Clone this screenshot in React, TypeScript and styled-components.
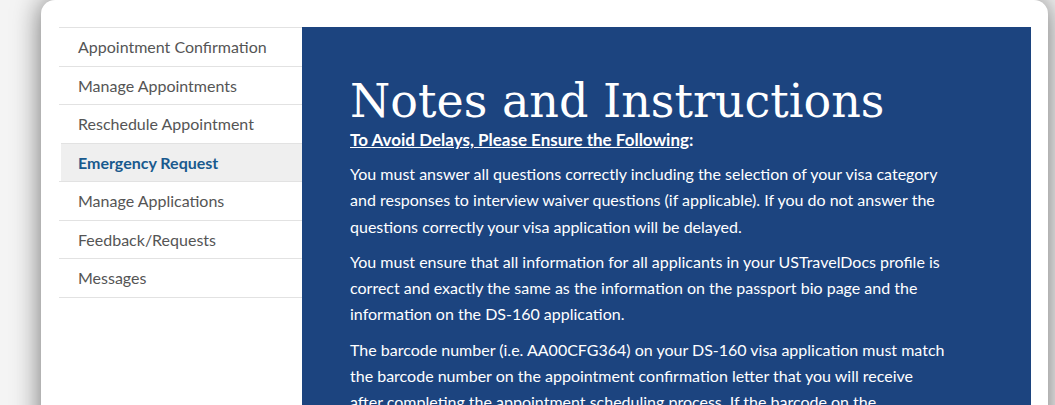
import React from 'react';
import styled, { createGlobalStyle } from 'styled-components';

const GlobalStyle = createGlobalStyle`
  html, body {
    margin: 0;
    padding: 0;
    background: #f4f4f4;
    overflow: hidden;
  }
`;

const Page = styled.div`
  padding: 0 7px 0 41px;
  height: 405px;
`;

const Card = styled.div`
  display: flex;
  align-items: flex-start;
  height: 420px;
  background: #fff;
  border-radius: 14px 14px 0 0;
  padding: 27px 17px 0 18px;
  box-shadow: 0 0 28px rgba(0, 0, 0, 0.55);
`;

const SideNav = styled.ul`
  list-style: none;
  margin: 0;
  padding: 0;
  width: 243px;
  flex-shrink: 0;
  border-bottom: 1px solid #e2e2e2;
`;

const NavItem = styled.li<{ $active?: boolean }>`
  border-top: 1px solid #e2e2e2;
  padding: 7px 19px;
  margin-left: ${(p) => (p.$active ? '2px' : '0')};
  padding-left: ${(p) => (p.$active ? '17px' : '19px')};
  line-height: 23.5px;
  font-family: Lato, "Open Sans", sans-serif;
  font-size: 16px;
  font-weight: ${(p) => (p.$active ? 700 : 400)};
  color: ${(p) => (p.$active ? '#195a8e' : '#555')};
  background: ${(p) => (p.$active ? '#efefef' : 'transparent')};
`;

const Notes = styled.section`
  flex: 1;
  align-self: stretch;
  background: #1c447f;
  color: #fff;
  padding: 46px 48px 0 48px;
`;

const Content = styled.div`
  width: 597px;
`;

const Title = styled.h1`
  margin: 0;
  font-family: "DejaVu Serif", "Liberation Serif", serif;
  font-weight: 400;
  font-size: 46px;
  line-height: 56px;
`;

const Subtitle = styled.p`
  margin: 0 0 10px;
  font-family: Lato, "Open Sans", sans-serif;
  font-weight: 700;
  font-size: 17px;
  line-height: 22px;
`;

const Lead = styled.span`
  text-decoration: underline;
`;

const Paragraph = styled.p`
  margin: 0 0 9px;
  font-family: Lato, "Open Sans", sans-serif;
  font-size: 16px;
  line-height: 26.3px;
`;

const navItems = [
  'Appointment Confirmation',
  'Manage Appointments',
  'Reschedule Appointment',
  'Emergency Request',
  'Manage Applications',
  'Feedback/Requests',
  'Messages',
];

const paragraphs = [
  'You must answer all questions correctly including the selection of your visa category and responses to interview waiver questions (if applicable). If you do not answer the questions correctly your visa application will be delayed.',
  'You must ensure that all information for all applicants in your USTravelDocs profile is correct and exactly the same as the information on the passport bio page and the information on the DS-160 application.',
  'The barcode number (i.e. AA00CFG364) on your DS-160 visa application must match the barcode number on the appointment confirmation letter that you will receive after completing the appointment scheduling process. If the barcode on the confirmation letter does not match, your application will be delayed.',
];

const App: React.FC = () => {
  return (
    <>
      <GlobalStyle />
      <Page>
        <Card>
          <SideNav>
            {navItems.map((item) => (
              <NavItem key={item} $active={item === 'Emergency Request'}>
                {item}
              </NavItem>
            ))}
          </SideNav>
          <Notes>
            <Content>
              <Title>Notes and Instructions</Title>
              <Subtitle>
                <Lead>To Avoid Delays, Please Ensure the Following</Lead>:
              </Subtitle>
              {paragraphs.map((text, i) => (
                <Paragraph key={i}>{text}</Paragraph>
              ))}
            </Content>
          </Notes>
        </Card>
      </Page>
    </>
  );
};

export default App;
